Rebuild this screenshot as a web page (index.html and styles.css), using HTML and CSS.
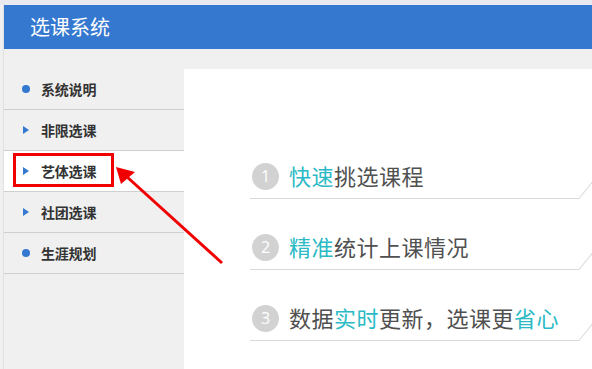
FILE: index.html
```html
<!DOCTYPE html>
<html lang="zh-CN">
<head>
<meta charset="utf-8">
<title>选课系统</title>
<link rel="stylesheet" href="styles.css">
</head>
<body>
<div class="topstrip"></div>
<div class="app">
  <header class="header">选课系统</header>
  <div class="main">
    <nav class="sidebar">
      <div class="item"><span class="dot"></span><span class="label">系统说明</span></div>
      <div class="item"><span class="tri"></span><span class="label">非限选课</span></div>
      <div class="item active"><span class="tri"></span><span class="label">艺体选课</span></div>
      <div class="item"><span class="tri"></span><span class="label">社团选课</span></div>
      <div class="item"><span class="dot"></span><span class="label">生涯规划</span></div>
    </nav>
    <section class="content">
      <div class="row"><span class="num">1</span><span class="text"><em>快速</em>挑选课程</span></div>
      <div class="row"><span class="num">2</span><span class="text"><em>精准</em>统计上课情况</span></div>
      <div class="row"><span class="num">3</span><span class="text">数据<em>实时</em>更新，选课更<em>省心</em></span></div>
    </section>
  </div>
</div>
<div class="highlight"></div>
<svg class="arrow" width="592" height="369" viewBox="0 0 592 369">
  <line x1="222" y1="263" x2="126" y2="176" stroke="#f00000" stroke-width="3"/>
  <polygon points="116,167 135,172 121,184" fill="#f00000"/>
</svg>
</body>
</html>
```
FILE: styles.css
```css
html, body {
  margin: 0;
  padding: 0;
  overflow: hidden;
}
body {
  width: 592px;
  height: 369px;
  background: #f0f0f0;
  font-family: "Noto Sans CJK SC", "Liberation Sans", sans-serif;
  position: relative;
}
.topstrip {
  height: 5px;
  background: #e8eaef;
}
.app {
  margin-left: 3px;
  border-left: 1px solid #e0e0e0;
  height: 364px;
  display: flex;
  flex-direction: column;
}
.header {
  height: 44px;
  background: #3578cf;
  color: #fff;
  font-size: 20px;
  line-height: 44px;
  padding-left: 26px;
  flex: none;
}
.main {
  flex: 1;
  display: flex;
  padding-top: 20px;
}
.sidebar {
  width: 180px;
  flex: none;
}
.item {
  height: 40px;
  border-bottom: 1px solid #cfcfcf;
  display: flex;
  align-items: center;
  padding-left: 18px;
  box-sizing: content-box;
}
.item.active {
  background: #fff;
}
.dot {
  width: 8px;
  height: 8px;
  border-radius: 50%;
  background: #3478d0;
  margin-right: 11px;
}
.tri {
  width: 0;
  height: 0;
  border-top: 4.5px solid transparent;
  border-bottom: 4.5px solid transparent;
  border-left: 6px solid #3478d0;
  margin-left: 1px;
  margin-right: 12px;
}
.label {
  font-size: 14px;
  font-weight: 700;
  color: #333;
  letter-spacing: -0.2px;
}
.content {
  flex: 1;
  background: #fff;
  padding-top: 87px;
  padding-left: 66px;
  display: flex;
  flex-direction: column;
  gap: 28px;
}
.row {
  position: relative;
  width: 329px;
  height: 42px;
  box-sizing: content-box;
  border-bottom: 1px solid #dadada;
  display: flex;
  align-items: center;
}
.row::after {
  content: "";
  position: absolute;
  left: 100%;
  bottom: -1px;
  width: 22px;
  height: 1px;
  background: #dadada;
  transform-origin: 0 50%;
  transform: rotate(-51deg);
}
.num {
  width: 27px;
  height: 27px;
  border-radius: 50%;
  background: #d2d2d2;
  color: #fff;
  font-size: 16px;
  line-height: 27px;
  text-align: center;
  margin-left: 2px;
  margin-right: 10px;
  margin-top: -2px;
  font-family: "Open Sans", "Liberation Sans", sans-serif;
}
.text {
  font-size: 22px;
  line-height: 30px;
  margin-top: -5px;
  color: #505050;
  letter-spacing: 0.5px;
}
.text em {
  font-style: normal;
  color: #2bbac6;
}
.highlight {
  position: absolute;
  left: 13px;
  top: 153px;
  width: 95px;
  height: 28px;
  border: 3px solid #f00000;
}
.arrow {
  position: absolute;
  left: 0;
  top: 0;
  pointer-events: none;
}
```
